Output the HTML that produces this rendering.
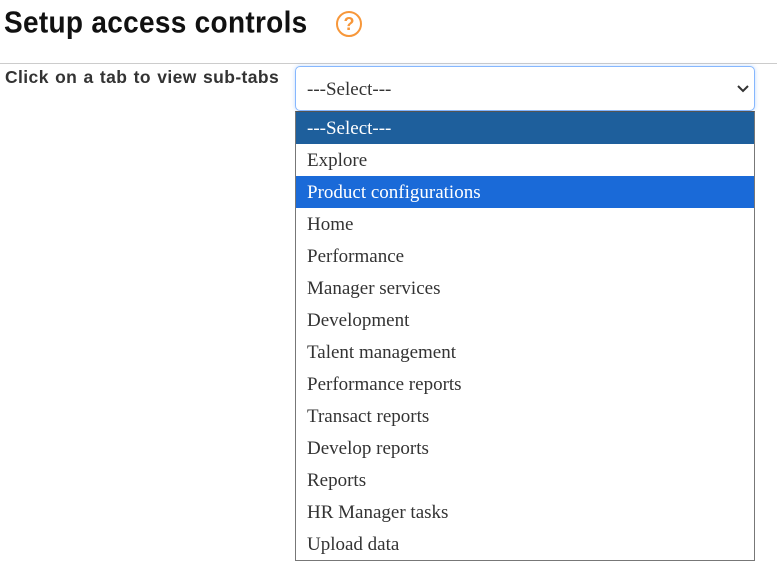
<html><head><style>
body{margin:0;width:777px;height:582px;background:#fff;position:relative;overflow:hidden;font-family:"Liberation Sans",sans-serif}
h1{position:absolute;left:4px;top:5px;margin:0;font-size:28px;font-weight:bold;color:#111;letter-spacing:0.3px;transform:scaleY(1.1);transform-origin:top left}
.q{position:absolute;left:336px;top:11px;width:22px;height:22px;border:2.5px solid #f7973a;border-radius:50%;color:#f7973a;font-weight:bold;font-size:18px;text-align:center;line-height:22px}
.hr{position:absolute;left:0;top:63px;width:777px;height:1px;background:#ccc}
.lbl{position:absolute;left:5px;top:67px;font-size:17.5px;font-weight:bold;color:#333;letter-spacing:0.4px;word-spacing:1px}
.sel{position:absolute;left:295px;top:66px;border:1px solid #86b7fe;border-radius:5px;box-shadow:0 0 4px rgba(13,110,253,.25);font-family:"Liberation Serif",serif;font-size:19px;color:#333;line-height:46px;padding-left:11px;box-sizing:border-box;width:460px;height:45px}
.dd{position:absolute;left:295px;top:111px;width:458px;border:1px solid #777;border-top:1px solid #555;background:#fff}
.dd div{height:32px;line-height:34px;padding-left:11px;font-family:"Liberation Serif",serif;font-size:19px;color:#333}
.a{background:#1e5f9c;color:#fff!important}
.b{background:#1a6ad8;color:#fff!important}
</style></head><body>
<h1>Setup access controls</h1>
<div class="q">?</div>
<div class="hr"></div>
<div class="lbl">Click on a tab to view sub-tabs</div>
<div class="sel">---Select---<svg style="position:absolute;right:5px;top:17px" width="12" height="9" viewBox="0 0 12 9"><path d="M1 2l5 5 5-5" fill="none" stroke="#333" stroke-width="2"/></svg></div>
<div class="dd">
<div class="a">---Select---</div><div>Explore</div><div class="b">Product configurations</div><div>Home</div><div>Performance</div><div>Manager services</div><div>Development</div><div>Talent management</div><div>Performance reports</div><div>Transact reports</div><div>Develop reports</div><div>Reports</div><div>HR Manager tasks</div><div>Upload data</div>
</div>
</body></html>
